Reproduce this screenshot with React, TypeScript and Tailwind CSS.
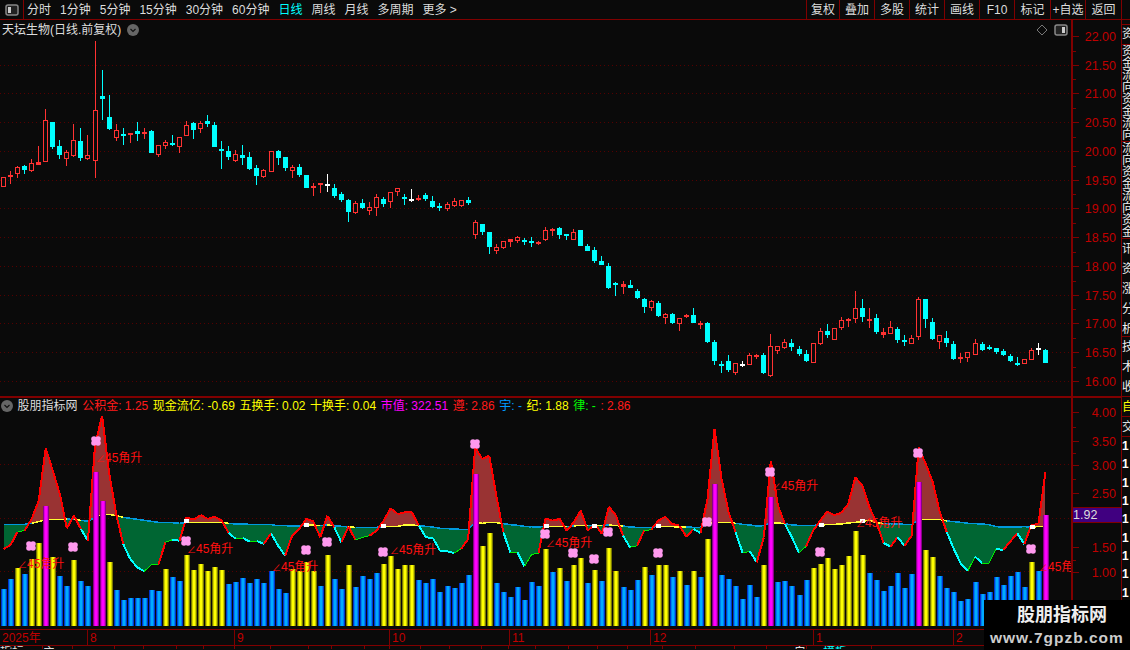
const CANDLES = `r177,187,177,187 r175,177,171,184 r167,174,166,178 c166,170,165,174 r163,171,159,172 r162,165,146,165 r120,162,109,162 c122,147,122,149 c146,155,140,159 r152,159,150,166
r140,156,124,157 c141,158,128,161 r155,159,135,160 r110,161,41,178 c96,99,70,120 c117,129,95,130 r130,138,124,141 c134,135,128,145 r133,135,133,143 c131,134,122,141
r132,134,128,139 c131,153,130,153 r145,155,145,157 r142,146,140,149 c143,144,135,146 r137,147,137,153 r125,136,121,136 c123,130,122,139 r123,129,121,133 c121,124,115,127
c125,147,122,147 c149,151,141,169 c151,157,146,160 r154,161,150,162 c155,158,145,165 c157,169,152,170 c168,176,165,185 r170,177,169,178 r151,172,151,172 c151,158,150,165
c157,168,157,171 r167,171,165,178 c167,175,164,177 c175,188,175,188 r186,187,183,196 r183,184,183,193 w184,185,174,192 c188,196,184,198 c194,200,192,202 c200,212,199,222
r203,213,201,214 c203,208,199,209 r207,211,202,215 r197,208,194,216 c199,204,197,207 r192,202,192,208 r188,192,188,196 c197,198,194,205 w199,200,189,202 r198,200,195,201
c195,199,193,201 c201,207,196,208 c206,208,203,211 r204,209,202,211 r201,206,198,207 r200,206,200,207 c200,203,197,205 r222,235,220,239 c224,232,224,235 c232,247,232,254
r247,251,244,254 r241,248,241,249 r239,242,239,247 r237,241,236,243 c240,241,238,245 c241,243,237,247 r242,244,241,245 r230,240,227,241 r229,231,228,236 c228,235,227,239
c234,235,234,240 r232,240,229,240 c230,246,230,246 c246,251,244,251 c250,261,247,263 c261,265,256,265 c266,288,263,289 c283,285,282,296 r284,287,281,294 c285,288,280,288
c291,298,289,299 c299,307,298,313 r301,308,300,311 c303,316,301,317 r314,318,313,324 c314,323,313,324 r318,324,318,331 r315,317,314,318 c315,323,308,323 r323,325,321,329
c323,342,322,343 c342,361,340,365 c364,366,361,373 c361,370,355,372 r363,373,363,375 w364,365,361,367 r355,365,353,365 r355,357,354,359 c355,373,353,374 r346,376,334,377
r346,351,346,354 r342,348,339,349 c343,347,339,351 c349,354,346,356 c354,361,350,362 r343,363,343,363 r331,344,328,345 c331,335,324,338 r328,340,328,340 r320,328,317,330
r319,320,318,327 r308,319,291,323 c308,317,299,322 r319,321,308,328 c318,332,314,334 r332,335,328,338 r327,334,321,334 c329,340,327,343 c340,342,335,346 r338,344,335,344
r299,337,297,340 c299,319,299,328 c322,339,318,340 r335,342,335,349 c338,343,331,347 c344,359,341,360 r357,358,353,363 r352,358,352,362 r343,355,339,355 c344,350,342,351
c347,348,345,350 c348,352,348,354 c351,355,349,356 c356,361,354,362 c363,364,357,366 r359,364,359,364 r350,360,348,360 w348,349,343,355 c350,363,349,363`
  .trim()
  .split(/\s+/)
  .map((s) => {
    const [t, b, h, l] = s.slice(1).split(",").map(Number);
    return { kind: s[0], t, b, h, l };
  });

const BARS = `b600 b570 y537 b555 y510 y462 m351 y504 b561 b591 y513 b576 b591 m249 m336 y519 b603 b633 b627 b627
b627 b603 b606 y540 b564 b576 y498 y543 y525 y546 y534 y543 b585 b579 b567 b582 b570 b582 b546 b600
b612 y540 y546 y520 y546 b591 y498 b570 b600 y528 b594 b561 b570 b552 y525 y501 y540 y528 y528 b573
b582 b570 b609 b591 b597 b582 b558 m255 y471 y432 b582 b609 b624 b594 b633 b579 b591 y480 b549 y537
b576 y528 y507 b582 y543 b576 y477 y546 b594 b603 b573 y534 b558 y528 y528 b564 y546 b588 y546 b564
y450 m285 b558 b570 b591 b630 b588 b624 y528 m324 b579 b576 b591 b618 b573 y537 y525 y507 y540 y528
y501 y426 y498 b552 b573 b606 b591 b552 b597 b555 m279 y483 y504 b561 b597 b609 b636 b630 b579 b615
b609 b564 b588 b561 b549 b594 y519 b546 m378`
  .trim()
  .split(/\s+/)
  .map((s) => ({ kind: s[0], top: 390 + Number(s.slice(1)) / 3 }));

// indicator curve and its baseline, zoomed y values
const CURVE = [
  480, 468, 428, 425, 390, 335, 178, 245, 315, 418, 380, 420, 455, 170, 80, 250, 375, 465, 510, 535,
  547, 527, 527, 460, 452, 455, 385, 392, 378, 390, 383, 395, 432, 450, 447, 458, 456, 465, 433, 470,
  500, 440, 420, 390, 397, 445, 380, 415, 460, 413, 453, 445, 440, 425, 395, 358, 375, 370, 370, 410,
  445, 447, 485, 487, 492, 480, 450, 175, 210, 200, 320, 430, 490, 490, 532, 497, 492, 388, 395, 390,
  425, 400, 365, 425, 405, 435, 353, 380, 440, 475, 470, 425, 422, 395, 383, 405, 410, 443, 420, 432,
  330, 120, 270, 370, 430, 492, 487, 520, 445, 215, 350, 405, 445, 492, 472, 425, 395, 368, 378, 372,
  345, 265, 290, 355, 400, 462, 473, 445, 470, 440, 175, 225, 280, 370, 430, 480, 525, 545, 503, 522,
  522, 480, 483, 458, 433, 465, 408, 405, 250,
].map((z) => 390 + z / 3);

const BASE = [
  406, 406, 406, 406, 403, 398, 392, 392, 392, 390, 392, 394, 397, 385, 376, 376, 380, 385, 388, 391,
  394, 397, 400, 400, 401, 403, 400, 400, 400, 400, 400, 400, 403, 405, 405, 406, 406, 407, 407, 410,
  410, 411, 411, 408, 408, 410, 408, 410, 412, 414, 415, 415, 415, 415, 412, 412, 412, 408, 408, 410,
  412, 414, 418, 419, 420, 421, 421, 400, 403, 400, 401, 404, 407, 409, 412, 414, 414, 412, 412, 412,
  413, 411, 409, 410, 410, 410, 408, 410, 411, 414, 415, 415, 415, 412, 412, 413, 414, 414, 415, 415,
  405, 400, 400, 400, 403, 406, 408, 411, 410, 402, 402, 404, 408, 409, 409, 409, 408, 407, 406, 405,
  402, 400, 398, 393, 402, 403, 405, 405, 406, 407, 391, 391, 391, 391, 396, 398, 400, 403, 404, 405,
  407, 413, 414, 414, 414, 413, 414, 413, 412,
].map((z) => 390 + z / 3);

const CLOVERS = [
  [31, 547], [96, 442], [73, 548], [186, 542], [306, 551], [327, 543], [383, 553], [475, 445],
  [545, 535], [573, 554], [594, 560], [608, 533], [658, 554], [707, 523], [770, 473], [820, 553],
  [918, 454], [1031, 550],
];

const LABELS = [
  [18, 569], [96, 463], [187, 554], [272, 572], [390, 555], [546, 548], [772, 491], [856, 528], [1039, 572],
];

const WHITE_MARKS = [
  [186, 522], [306, 526], [383, 527], [546, 527], [594, 527], [658, 527], [821, 526], [862, 522], [1032, 528],
];

const PRICE_GRID = [65.5, 93.5, 122.5, 151.5, 180.5, 208.5, 237.5, 266.5, 295.5, 323.5, 352.5, 381.5];
const PRICE_TICKS = [
  ["22.00", 36], ["21.50", 65], ["21.00", 93], ["20.50", 122], ["20.00", 151], ["19.50", 180],
  ["19.00", 208], ["18.50", 237], ["18.00", 266], ["17.50", 295], ["17.00", 323], ["16.50", 352], ["16.00", 381],
] as const;
const INDICATOR_TICKS = [
  ["4.00", 412], ["3.50", 441], ["3.00", 465], ["2.50", 493], ["1.50", 547], ["1.00", 572],
] as const;

const TIME_SEGMENTS = [
  ["2025年", 87], ["8", 147], ["9", 155], ["10", 120], ["11", 141], ["12", 163], ["1", 140], ["2", 118],
] as const;

// bottom tab strip, only the top pixels of it are in view
const BOTTOM_TABS = [
  ["指标", 43, ""], ["主", 30, ""], ["", 42, ""], ["", 29, ""], ["", 33, ""], ["", 27, ""], ["", 31, ""],
  ["", 36, ""], ["", 38, ""], ["", 23, ""], ["", 33, ""], ["", 25, ""], ["", 31, ""], ["", 29, ""],
  ["", 32, ""], ["", 27, ""], ["", 27, ""], ["", 33, ""], ["", 29, ""], ["", 30, ""], ["", 35, ""],
  ["", 33, ""], ["", 39, ""], ["", 32, ""], ["白", 40, "text-right"], ["模板", 65, "text-[#00ffff] pl-[16px]"],
] as const;

const TABS = ["分时", "1分钟", "5分钟", "15分钟", "30分钟", "60分钟", "日线", "周线", "月线", "多周期", "更多 >"];
const ACTIONS = [
  ["复权", "w-[33px]"], ["叠加", "w-[35px]"], ["多股", "w-[35px]"], ["统计", "w-[35px]"], ["画线", "w-[35px]"],
  ["F10", "w-[35px]"], ["标记", "w-[36px]"], ["+自选", "w-[35px]"], ["返回", "w-[36px]"], ["", "w-[9px]"],
] as const;

const RED = "#ff3232";
const CYAN = "#00ffff";
const xAt = (i: number) => 3.5 + 7.04 * i;

function PaneIcon({ light }: { light: "left" | "right" }) {
  return (
    <svg width="14" height="12" viewBox="0 0 14 12">
      <rect x="1" y="1" width="12" height="10" rx="2" fill="#222" stroke="#888" strokeWidth="1.5" />
      <rect x={light === "left" ? 3 : 8} y="3" width="3" height="6" fill="#ccc" />
    </svg>
  );
}

function RoundButton() {
  return (
    <svg width="12" height="12" viewBox="0 0 12 12" className="shrink-0">
      <circle cx="6" cy="6" r="6" fill="#666" />
      <path d="M3.5 5 L6 7.5 L8.5 5" fill="none" stroke="#111" strokeWidth="1.2" />
    </svg>
  );
}

function DottedGrid({ rows }: { rows: number[] }) {
  return (
    <>
      {rows.map((y) => (
        <line key={y} x1="0" x2="1071" y1={y} y2={y} stroke="#550000" strokeDasharray="1 3" />
      ))}
    </>
  );
}

function CandleChart() {
  return (
    <svg width="1071" height="356" viewBox="0 40 1071 356" shapeRendering="crispEdges" className="block">
      <DottedGrid rows={PRICE_GRID} />
      {CANDLES.map((c, i) => {
        const x = Math.floor(xAt(i));
        const color = c.kind === "r" ? RED : c.kind === "c" ? CYAN : "#ffffff";
        const height = Math.max(c.b - c.t, 2);
        return (
          <g key={i}>
            <rect x={x} y={c.h} width="1" height={c.l - c.h} fill={color} />
            <rect x={x - 2} y={c.t} width="5" height={height} fill={color} />
            {c.kind === "r" && height > 3 && (
              <rect x={x - 1} y={c.t + 1} width="3" height={height - 2} fill="#0a0a0a" />
            )}
          </g>
        );
      })}
    </svg>
  );
}

function segmentColor(i: number) {
  const y0 = CURVE[i];
  const y1 = CURVE[i + 1];
  if (y1 < BASE[i + 1] || y0 < BASE[i]) return { color: "#ff0000", width: 2 };
  if (y1 > y0) return { color: CYAN, width: 2 };
  if (y1 < 390 + 470 / 3 && y0 - y1 > 3) return { color: "#ff0000", width: 2 };
  return { color: "#00ee00", width: 1 };
}

function AreaFill() {
  const polys: { points: string; fill: string }[] = [];
  const up = "#993333";
  const down = "#006633";
  for (let i = 0; i < CURVE.length - 1; i++) {
    const x0 = xAt(i);
    const x1 = xAt(i + 1);
    const d0 = CURVE[i] - BASE[i];
    const d1 = CURVE[i + 1] - BASE[i + 1];
    if (d0 * d1 < 0) {
      const t = d0 / (d0 - d1);
      const xc = x0 + (x1 - x0) * t;
      const yc = CURVE[i] + (CURVE[i + 1] - CURVE[i]) * t;
      polys.push({ points: `${x0},${CURVE[i]} ${xc},${yc} ${x0},${BASE[i]}`, fill: d0 < 0 ? up : down });
      polys.push({ points: `${xc},${yc} ${x1},${CURVE[i + 1]} ${x1},${BASE[i + 1]}`, fill: d1 < 0 ? up : down });
    } else {
      polys.push({
        points: `${x0},${CURVE[i]} ${x1},${CURVE[i + 1]} ${x1},${BASE[i + 1]} ${x0},${BASE[i]}`,
        fill: d0 < 0 || d1 < 0 ? up : down,
      });
    }
  }
  return (
    <>
      {polys.map((p, i) => (
        <polygon key={i} points={p.points} fill={p.fill} />
      ))}
    </>
  );
}

function Bar({ x, top, kind }: { x: number; top: number; kind: string }) {
  const shades =
    kind === "y"
      ? ["#777700", "#cccc00", "#ffff00"]
      : kind === "m"
        ? ["#880088", "#dd00dd", "#ff00ff"]
        : ["#0033cc", "#0080f0", "#00aaff"];
  const height = 627 - top;
  return (
    <g>
      <rect x={x - 2} y={top} width="6" height={height} fill={shades[0]} />
      <rect x={x - 1} y={top} width="4" height={height} fill={shades[1]} />
      <rect x={x} y={top} width="2" height={height} fill={shades[2]} />
    </g>
  );
}

function IndicatorChart() {
  return (
    <svg width="1071" height="215" viewBox="0 415 1071 215" className="block">
      <DottedGrid rows={[465.5, 519.5, 572.5]} />
      <g shapeRendering="crispEdges">
        <AreaFill />
        {BASE.slice(0, -1).map((y, i) => (
          <line
            key={i}
            x1={xAt(i)}
            x2={xAt(i + 1)}
            y1={y}
            y2={BASE[i + 1]}
            stroke={CURVE[i] < y ? "#ffff33" : "#0099dd"}
            strokeWidth="1.5"
          />
        ))}
        {CURVE.slice(0, -1).map((y, i) => {
          const seg = segmentColor(i);
          return (
            <line
              key={i}
              x1={xAt(i)}
              x2={xAt(i + 1)}
              y1={y}
              y2={CURVE[i + 1]}
              stroke={seg.color}
              strokeWidth={seg.width}
            />
          );
        })}
        {WHITE_MARKS.map(([x, y]) => (
          <rect key={x} x={x - 2} y={y - 2} width="5" height="4" fill="#ffffff" />
        ))}
        {BARS.map((b, i) => (
          <Bar key={i} x={Math.floor(xAt(i))} top={b.top} kind={b.kind} />
        ))}
      </g>
      {CLOVERS.map(([x, y]) => (
        <g key={`${x}-${y}`} fill="#ff99ee">
          <circle cx={x - 2} cy={y - 2} r="2.8" />
          <circle cx={x + 2} cy={y - 2} r="2.8" />
          <circle cx={x - 2} cy={y + 2} r="2.8" />
          <circle cx={x + 2} cy={y + 2} r="2.8" />
        </g>
      ))}
      {LABELS.map(([x, y]) => (
        <text key={x} x={x} y={y} fontSize="12" fill="#ff1010">
          <tspan fontSize="9">∠</tspan>45角升
        </text>
      ))}
    </svg>
  );
}

function AxisTicks({ ticks, from, to }: { ticks: readonly (readonly [string, number])[]; from: number; to: number }) {
  return (
    <svg width="49" height={to - from} viewBox={`1072 ${from} 49 ${to - from}`} className="block">
      {ticks.map(([label, y], i) => (
        <g key={label}>
          <rect x="1072" y={y} width="6" height="1" fill="#800000" />
          {i < ticks.length - 1 && (
            <rect x="1072" y={Math.round((y + ticks[i + 1][1]) / 2)} width="3" height="1" fill="#800000" />
          )}
          <text x="1115" y={y + 5} textAnchor="end" fontSize="12.5" fill="#c00000">
            {label}
          </text>
        </g>
      ))}
    </svg>
  );
}

function StripChars({ chars, row, className }: { chars: string; row: string; className: string }) {
  return (
    <div className={`overflow-hidden border-b border-[#800000] ${className}`}>
      {chars.split("").map((ch, i) => (
        <div key={i} className={`w-[12px] text-[12px] text-[#eeeeee] ${row}`}>
          {ch}
        </div>
      ))}
    </div>
  );
}

export default function App() {
  return (
    <div className="relative flex h-[650px] w-[1130px] flex-col overflow-hidden bg-[#0a0a0a] text-[12px] leading-none text-[#dddddd] [font-family:'Liberation_Sans','Noto_Sans_CJK_SC',sans-serif]">
      {/* toolbar */}
      <div className="flex h-[20px] shrink-0 items-stretch border-b border-[#800000]">
        <div className="flex w-[24px] items-center justify-center border-r border-[#800000]">
          <PaneIcon light="left" />
        </div>
        <div className="flex items-center gap-[9px] pl-[3px]">
          {TABS.map((t) => (
            <span key={t} className={t === "日线" ? "text-[#00ffff]" : ""}>
              {t}
            </span>
          ))}
        </div>
        <div className="ml-auto flex">
          {ACTIONS.map(([t, w], i) => (
            <div key={i} className={`flex items-center justify-center border-l border-[#800000] ${w}`}>
              {t}
            </div>
          ))}
        </div>
      </div>

      <div className="flex min-h-0 flex-1">
        {/* charts */}
        <div className="flex w-[1071px] shrink-0 flex-col">
          <div className="flex h-[20px] items-center pl-[2px]">
            <span>天坛生物(日线.前复权)</span>
            <span className="ml-[6px]">
              <RoundButton />
            </span>
            <span className="ml-auto mr-[3px] flex items-center gap-[6px]">
              <svg width="12" height="12" viewBox="0 0 12 12">
                <path d="M6 1 L11 6 L6 11 L1 6 Z" fill="none" stroke="#777" />
              </svg>
              <PaneIcon light="right" />
            </span>
          </div>
          <CandleChart />
          <div className="flex h-[18px] items-center gap-[4.6px] border-t-2 border-[#800000] pl-[1px]">
            <RoundButton />
            <span>股朋指标网</span>
            <span className="text-[#ff1a1a]">公积金: 1.25</span>
            <span className="text-[#ffff00]">现金流亿: -0.69</span>
            <span className="text-[#ffff00]">五换手: 0.02</span>
            <span className="text-[#ffff00]">十换手: 0.04</span>
            <span className="text-[#ff00ff]">市值: 322.51</span>
            <span className="text-[#ff1a1a]">遵: 2.86</span>
            <span className="text-[#0099ff]">宇: -</span>
            <span className="text-[#ffff00]">纪: 1.88</span>
            <span className="text-[#00ff00]">律: -</span>
            <span className="text-[#ff1a1a]">: 2.86</span>
          </div>
          <IndicatorChart />
          <div className="relative flex h-[17px] shrink-0 border-y border-[#800000]">
            {TIME_SEGMENTS.map(([label, width], i) => (
              <div
                key={label}
                style={{ width }}
                className={`flex items-center pl-[2px] text-[#c00000] ${i > 0 ? "border-l border-[#800000]" : ""}`}
              >
                {label}
              </div>
            ))}
          </div>
          <div className="flex h-[3px] overflow-hidden">
            {BOTTOM_TABS.map(([label, width, extra], i) => (
              <div key={i} style={{ width }} className={`shrink-0 border-r border-[#800000] ${extra}`}>
                {label}
              </div>
            ))}
          </div>
        </div>

        {/* price axis */}
        <div className="flex w-[50px] shrink-0 flex-col border-l-2 border-[#800000]">
          <div className="h-[376px] shrink-0">
            <AxisTicks ticks={PRICE_TICKS} from={20} to={396} />
          </div>
          <div className="h-[234px] shrink-0 border-t-2 border-[#800000]">
            <div className="relative">
              <AxisTicks ticks={INDICATOR_TICKS} from={398} to={630} />
              <div className="absolute left-0 top-[109px] flex h-[16px] w-[49px] items-center border-y border-[#800000] bg-[#400080] text-[12.5px] text-[#dddddd]">
                1.92
              </div>
            </div>
          </div>
        </div>

        {/* clipped side list */}
        <div className="flex w-[9px] shrink-0 flex-col overflow-hidden border-l border-[#800000]">
          <div className="h-[5px] shrink-0 border-b border-[#800000]" />
          <StripChars chars="资" row="h-[19px] leading-[19px]" className="h-[20px] shrink-0" />
          <StripChars chars="资金流向资金流向" row="h-[12px] leading-[12px]" className="h-[97px] shrink-0" />
          <StripChars chars="流向资金流向资金" row="h-[12px] leading-[12px]" className="h-[97px] shrink-0" />
          <StripChars chars="讯资涨分析" row="h-[20px] leading-[20px]" className="h-[98px] shrink-0" />
          <StripChars chars="技术收" row="h-[20px] leading-[20px]" className="h-[60px] shrink-0" />
          <div className="flex h-[20px] shrink-0 items-center border-b border-[#800000] text-[#ffff00]">自</div>
          <div className="flex h-[20px] shrink-0 items-center border-b border-[#800000]">交</div>
          {Array.from({ length: 11 }, (_, i) => (
            <div key={i} className="flex h-[18.3px] shrink-0 items-center font-bold text-white">
              1
            </div>
          ))}
        </div>
      </div>

      {/* site watermark */}
      <div className="absolute bottom-0 right-0 flex h-[50px] w-[146px] flex-col items-start justify-center gap-[3px] bg-black font-bold">
        <span className="ml-[33px] text-[18px] leading-[22px] text-[#eeeeee]">股朋指标网</span>
        <span className="ml-[6px] text-[15.5px] leading-[18px] tracking-[1px] text-[#cccccc]">www.7gpzb.com</span>
      </div>
    </div>
  );
}
